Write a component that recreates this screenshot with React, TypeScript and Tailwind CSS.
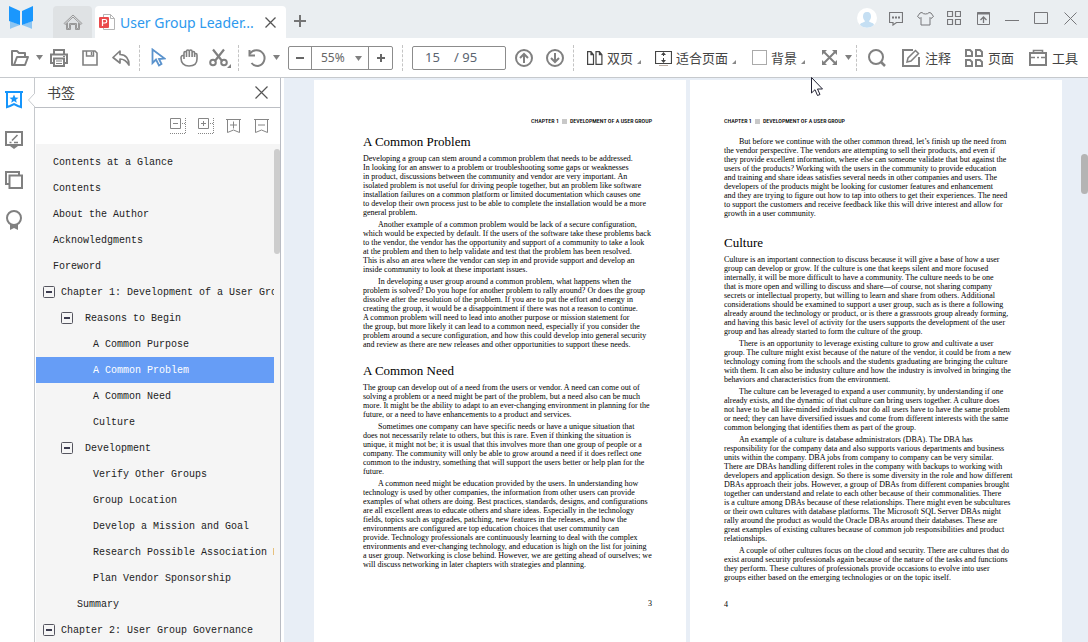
import { useState, type ReactNode } from "react";

type Row = { label: string; kind: "top" | "chapter" | "group" | "leaf" | "end" };

const rows: Row[] = [
  { label: "Contents at a Glance", kind: "top" },
  { label: "Contents", kind: "top" },
  { label: "About the Author", kind: "top" },
  { label: "Acknowledgments", kind: "top" },
  { label: "Foreword", kind: "top" },
  { label: "Chapter 1: Development of a User Group", kind: "chapter" },
  { label: "Reasons to Begin", kind: "group" },
  { label: "A Common Purpose", kind: "leaf" },
  { label: "A Common Problem", kind: "leaf" },
  { label: "A Common Need", kind: "leaf" },
  { label: "Culture", kind: "leaf" },
  { label: "Development", kind: "group" },
  { label: "Verify Other Groups", kind: "leaf" },
  { label: "Group Location", kind: "leaf" },
  { label: "Develop a Mission and Goal", kind: "leaf" },
  { label: "Research Possible Association Relations", kind: "leaf" },
  { label: "Plan Vendor Sponsorship", kind: "leaf" },
  { label: "Summary", kind: "end" },
  { label: "Chapter 2: User Group Governance", kind: "chapter" },
];

const rowStyle = {
  top: "pl-[17px]",
  chapter: "pl-[7px] gap-[6px]",
  group: "pl-[25px] gap-[12px]",
  leaf: "pl-[57px]",
  end: "pl-[41px]",
};

const problem = [
  `Developing a group can stem around a common problem that needs to be addressed.
In looking for an answer to a problem or troubleshooting some gaps or weaknesses
in product, discussions between the community and vendor are very important. An
isolated problem is not useful for driving people together, but an problem like software
installation failures on a common platform or limited documentation which causes one
to develop their own process just to be able to complete the installation would be a more
general problem.`,
  `Another example of a common problem would be lack of a secure configuration,
which would be expected by default. If the users of the software take these problems back
to the vendor, the vendor has the opportunity and support of a community to take a look
at the problem and then to help validate and test that the problem has been resolved.
This is also an area where the vendor can step in and provide support and develop an
inside community to look at these important issues.`,
  `In developing a user group around a common problem, what happens when the
problem is solved? Do you hope for another problem to rally around? Or does the group
dissolve after the resolution of the problem. If you are to put the effort and energy in
creating the group, it would be a disappointment if there was not a reason to continue.
A common problem will need to lead into another purpose or mission statement for
the group, but more likely it can lead to a common need, especially if you consider the
problem around a secure configuration, and how this could develop into general security
and review as there are new releases and other opportunities to support these needs.`,
];

const need = [
  `The group can develop out of a need from the users or vendor. A need can come out of
solving a problem or a need might be part of the problem, but a need also can be much
more. It might be the ability to adapt to an ever-changing environment in planning for the
future, or a need to have enhancements to a product and services.`,
  `Sometimes one company can have specific needs or have a unique situation that
does not necessarily relate to others, but this is rare. Even if thinking the situation is
unique, it might not be; it is usual that this involves more than one group of people or a
company. The community will only be able to grow around a need if it does reflect one
common to the industry, something that will support the users better or help plan for the
future.`,
  `A common need might be education provided by the users. In understanding how
technology is used by other companies, the information from other users can provide
examples of what others are doing. Best practices, standards, designs, and configurations
are all excellent areas to educate others and share ideas. Especially in the technology
fields, topics such as upgrades, patching, new features in the releases, and how the
environments are configured are top education choices that user community can
provide. Technology professionals are continuously learning to deal with the complex
environments and ever-changing technology, and education is high on the list for joining
a user group. Networking is close behind. However, we are getting ahead of ourselves; we
will discuss networking in later chapters with strategies and planning.`,
];

const vendor = [
  `But before we continue with the other common thread, let’s finish up the need from
the vendor perspective. The vendors are attempting to sell their products, and even if
they provide excellent information, where else can someone validate that but against the
users of the products? Working with the users in the community to provide education
and training and share ideas satisfies several needs in other companies and users. The
developers of the products might be looking for customer features and enhancement
and they are trying to figure out how to tap into others to get their experiences. The need
to support the customers and receive feedback like this will drive interest and allow for
growth in a user community.`,
];

const culture = [
  `Culture is an important connection to discuss because it will give a base of how a user
group can develop or grow. If the culture is one that keeps silent and more focused
internally, it will be more difficult to have a community. The culture needs to be one
that is more open and willing to discuss and share—of course, not sharing company
secrets or intellectual property, but willing to learn and share from others. Additional
considerations should be examined to support a user group, such as is there a following
already around the technology or product, or is there a grassroots group already forming,
and having this basic level of activity for the users supports the development of the user
group and has already started to form the culture of the group.`,
  `There is an opportunity to leverage existing culture to grow and cultivate a user
group. The culture might exist because of the nature of the vendor, it could be from a new
technology coming from the schools and the students graduating are bringing the culture
with them. It can also be industry culture and how the industry is involved in bringing the
behaviors and characteristics from the environment.`,
  `The culture can be leveraged to expand a user community, by understanding if one
already exists, and the dynamic of that culture can bring users together. A culture does
not have to be all like-minded individuals nor do all users have to have the same problem
or need; they can have diversified issues and come from different interests with the same
common belonging that identifies them as part of the group.`,
  `An example of a culture is database administrators (DBA). The DBA has
responsibility for the company data and also supports various departments and business
units within the company. DBA jobs from company to company can be very similar.
There are DBAs handling different roles in the company with backups to working with
developers and application design. So there is some diversity in the role and how different
DBAs approach their jobs. However, a group of DBAs from different companies brought
together can understand and relate to each other because of their commonalities. There
is a culture among DBAs because of these relationships. There might even be subcultures
or their own cultures with database platforms. The Microsoft SQL Server DBAs might
rally around the product as would the Oracle DBAs around their databases. These are
great examples of existing cultures because of common job responsibilities and product
relationships.`,
  `A couple of other cultures focus on the cloud and security. There are cultures that do
exist around security professionals again because of the nature of the tasks and functions
they perform. These cultures of professionals provide occasions to evolve into user
groups either based on the emerging technologies or on the topic itself.`,
];

function Icon({ w = 18, h = 18, sw = 2, children }: { w?: number; h?: number; sw?: number; children: ReactNode }) {
  return (
    <svg width={w} height={h} viewBox={`0 0 ${w} ${h}`} fill="none" stroke="currentColor" strokeWidth={sw} className="shrink-0" aria-hidden="true">
      {children}
    </svg>
  );
}

function IconButton({ label, children }: { label: string; children: ReactNode }) {
  return (
    <button type="button" aria-label={label} className="flex h-8 w-6 shrink-0 items-center justify-center text-[#808080]">
      {children}
    </button>
  );
}

function Caret({ label }: { label: string }) {
  return (
    <button type="button" aria-label={label} className="flex h-8 w-[15px] shrink-0 items-center justify-center text-[#808080]">
      <svg width="7" height="5" viewBox="0 0 7 5" fill="currentColor">
        <path d="M0 0h7L3.5 5z" />
      </svg>
    </button>
  );
}

function Corner() {
  return (
    <svg width="4" height="4" viewBox="0 0 4 4" fill="#888888" className="mt-2 shrink-0" aria-hidden="true">
      <path d="M4 0v4H0z" />
    </svg>
  );
}

function Divider() {
  return <span className="mx-[6px] h-[26px] shrink-0 border-l border-dashed border-[#c4c4c4]" />;
}

function TitleBar() {
  return (
    <header className="flex h-[38px] shrink-0 items-end bg-[#eaeef1] pr-2">
      <svg width="26" height="24" viewBox="0 0 26 24" className="mb-2 ml-2 mr-[19px]" aria-label="PDF reader">
        <path d="M2 15l10 4-8 3-2 1z" fill="#8cc5f2" />
        <path d="M24 15l-10 4 8 3 2 1z" fill="#8cc5f2" />
        <path d="M1 0l11 5v14L1 15z" fill="#1a97fd" />
        <path d="M25 0L14 5v14l11-4z" fill="#1a97fd" />
      </svg>
      <button type="button" aria-label="Home" className="mr-[3px] flex h-8 w-[39px] items-center justify-center rounded-t bg-[#dfe2e4] text-[#999999]">
        <Icon w={20} h={18} sw={1}>
          <path d="M1 10.500L10 2l9 8.500-1 1-8-7.500-8 7.500zM3.500 10.500v6h4v-5h5v5h4v-6" />
          <path d="M4.500 10v5.500h2v-5h7v5h2V10" />
        </Icon>
      </button>
      <div className="flex h-8 w-[191px] items-center rounded-t bg-white pl-1">
        <svg width="17" height="17" viewBox="0 0 17 17" className="mr-1 shrink-0" aria-hidden="true">
          <path d="M4.500 .5h7l4 4v11h-11z" fill="#fff" stroke="#b5b5b5" />
          <path d="M11.500 .5v4h4" fill="none" stroke="#b5b5b5" />
          <rect y="3" width="10" height="11" rx="1" fill="#ea4a4c" />
          <path d="M3.500 12V5.500H6a1.500 1.500 0 010 3.500H3.500" fill="none" stroke="#fff" strokeWidth="1.200" />
        </svg>
        <span className="flex-1 whitespace-nowrap font-['Noto_Sans','Noto_Sans_CJK_SC',sans-serif] text-[14px] text-[#2d99ee]">User Group Leader...</span>
        <button type="button" aria-label="Close tab" className="mr-2.5 text-[#555555]">
          <Icon w={11} h={11} sw={1}>
            <path d="M.5 .5l10 10M10.500 .5l-10 10" strokeWidth="1.300" />
          </Icon>
        </button>
      </div>
      <button type="button" aria-label="New tab" className="mb-[11px] ml-2 text-[#757575]">
        <Icon w={12} h={12}>
          <path d="M6 0v12M0 6h12" />
        </Icon>
      </button>
      <div className="mb-[10px] ml-auto flex items-center gap-[9px] text-[#77777a]">
        <button type="button" aria-label="Account" className="flex w-5 justify-center">
          <svg width="20" height="20" viewBox="0 0 20 20">
            <circle cx="10" cy="10" r="10" fill="#fff" />
            <path d="M10 4c3 0 4 2 4 4.500 0 2-1 3.500-2 4.500 0 1.500 5 1.500 5 4a10 10 0 01-14 0c0-2.500 5-2.500 5-4-1-1-2-2.500-2-4.500C6 6 7 4 10 4z" fill="#c5dff3" />
          </svg>
        </button>
        <button type="button" aria-label="Feedback" className="flex w-5 justify-center">
          <Icon w={14} h={15} sw={1}>
            <path d="M.5 1.500h13v10h-6L4 14v-2.500H.5z" strokeWidth="1.200" />
            <path d="M3 6.500h2M6 6.500h2M9 6.500h2" strokeWidth="2" />
          </Icon>
        </button>
        <button type="button" aria-label="Skin" className="flex w-5 justify-center">
          <Icon w={17} h={15} sw={1}>
            <path d="M5 1.500c1 2 6 2 7 0l2 .5 2.500 3.500-2.500 2-1-1v7.500H4V6.500l-1 1-2.500-2L3 2z" />
          </Icon>
        </button>
        <button type="button" aria-label="Apps" className="flex w-5 justify-center">
          <Icon w={14} h={14} sw={1}>
            <path d="M.5 .5h5v5h-5zM8.500 .5h5v5h-5zM.5 8.500h5v5h-5zM8.500 8.500h5v5h-5z" strokeWidth="1.200" />
          </Icon>
        </button>
        <button type="button" aria-label="Upload" className="flex w-5 justify-center">
          <Icon w={13} h={13} sw={1}>
            <path d="M.5 .5h12v12H.5z" />
            <path d="M0 1.500h13" strokeWidth="2" />
            <path d="M6.500 11V5M3.500 8l3-3 3 3" strokeWidth="1.300" />
          </Icon>
        </button>
        <button type="button" aria-label="Minimize" className="flex w-5 justify-center">
          <Icon w={14} h={12} sw={1}>
            <path d="M0 8.500h14" />
          </Icon>
        </button>
        <button type="button" aria-label="Maximize" className="flex w-5 justify-center">
          <Icon w={14} h={13} sw={1}>
            <path d="M.5 .5h13v11H.5z" />
          </Icon>
        </button>
        <button type="button" aria-label="Close" className="flex w-5 justify-center">
          <Icon w={13} h={13} sw={1}>
            <path d="M.5 .5l12 12M12.500 .5l-12 12" />
          </Icon>
        </button>
      </div>
    </header>
  );
}

function Toolbar() {
  const [page, setPage] = useState("15");

  return (
    <div className="flex h-10 shrink-0 items-center border-b border-[#c6c9cd] bg-white pl-2 pr-[10px] font-['Noto_Sans_CJK_SC',sans-serif] text-[13px] text-[#444444]">
      <IconButton label="Open">
        <Icon>
          <path d="M3 16L1 16V2h5l2 2h6v3M3 16l3-8h11l-3 8z" strokeLinejoin="round" />
        </Icon>
      </IconButton>
      <Caret label="Open recent" />
      <div className="flex gap-[7px]">
        <IconButton label="Print">
          <Icon>
            <path d="M4 5V1h10v4M4 14H1V5.500h16V14h-3M4 9.500h10V17H4z" />
            <path d="M6 12h6M6 14.500h6M13 7.500h2" strokeWidth="1" />
          </Icon>
        </IconButton>
        <IconButton label="Save">
          <Icon w={16} h={16} sw={1}>
            <path d="M1 1h12l2 2v12H1z" strokeWidth="1.600" />
            <path d="M4.500 1v5h7V1M9.500 2v3" strokeWidth="1.400" />
          </Icon>
        </IconButton>
        <IconButton label="Share">
          <Icon>
            <path d="M8 2L1 8.500 8 14v-4c4 0 6.500 2 9 6 0-6-3-10.500-9-10.500z" strokeWidth="1.700" strokeLinejoin="round" />
          </Icon>
        </IconButton>
      </div>
      <Divider />
      <div className="flex gap-[7px]">
        <IconButton label="Select">
          <svg width="15" height="19" viewBox="0 0 15 19" fill="none" stroke="#5b93cd" strokeWidth="1.800">
            <path d="M1.500 1.500v13.500l3.500-3.500 3 6 2.500-1.500-2.500-5 5.500-.5z" />
          </svg>
        </IconButton>
        <IconButton label="Hand">
          <Icon sw={1.6}>
            <path d="M4 10V4c0-2 2.500-2 2.500 0v4M6.500 8V2.500c0-2 2.800-2 2.800 0V8M9.300 8V2.500c0-2 2.800-2 2.800 0V8M12.100 8V4c0-2 2.500-2 2.500 0v4M14.600 8V6c0-2 2.400-2 2.400 0v4c0 5-3 7-8 7s-8-3-8-8c0-2.500 1.500-3 3-2" />
          </Icon>
        </IconButton>
        <IconButton label="Snapshot">
          <Icon w={22} h={20}>
            <path d="M4 1.500l9.500 12M15 1.500l-9.500 12" strokeWidth="2.200" />
            <circle cx="4" cy="14.500" r="2.800" />
            <circle cx="15" cy="14.500" r="2.800" />
            <path d="M22 16v4h-4z" fill="currentColor" stroke="none" />
          </Icon>
        </IconButton>
      </div>
      <Divider />
      <IconButton label="Rotate">
        <Icon>
          <path d="M2 4.500A8 8 0 1110 17c-3 0-5-1-6.500-3M1.500 1v5.500H7" />
        </Icon>
      </IconButton>
      <Caret label="Rotate options" />
      <div className="relative ml-1 flex h-6 w-[105px] shrink-0 rounded-xs border border-[#8c8c8c] font-['Noto_Sans',sans-serif] text-[#666666]">
        <button type="button" aria-label="Zoom out" className="flex w-[23px] items-center justify-center border-r border-[#8c8c8c]">
          <Icon w={8} h={8}>
            <path d="M0 4h8" />
          </Icon>
        </button>
        <select aria-label="Zoom" className="w-14 appearance-none bg-transparent pl-[9px] text-[12px] outline-none">
          <option>55%</option>
          <option>100%</option>
        </select>
        <svg width="7" height="5" viewBox="0 0 7 5" fill="#808080" className="pointer-events-none absolute left-[66px] top-[9px]">
          <path d="M0 0h7L3.500 5z" />
        </svg>
        <button type="button" aria-label="Zoom in" className="flex flex-1 items-center justify-center border-l border-[#8c8c8c]">
          <Icon w={8} h={8}>
            <path d="M0 4h8M4 0v8" />
          </Icon>
        </button>
      </div>
      <span className="mx-[9px] h-[26px] border-l border-dashed border-[#c4c4c4]" />
      <label className="mr-1.5 flex h-6 w-[94px] shrink-0 items-center rounded-xs border border-[#8c8c8c] pl-3 font-['Noto_Sans',sans-serif] text-[13px] text-[#5a6470]">
        <input aria-label="Page" value={page} onChange={(e) => setPage(e.target.value)} className="w-[29px] bg-transparent outline-none" />
        <span className="whitespace-pre">/ 95</span>
      </label>
      <div className="flex gap-[7px]">
        <IconButton label="Previous page">
          <Icon>
            <circle cx="9" cy="9" r="8" />
            <path d="M9 14V5M5 9l4-4 4 4" />
          </Icon>
        </IconButton>
        <IconButton label="Next page">
          <Icon>
            <circle cx="9" cy="9" r="8" />
            <path d="M9 4v9M5 9l4 4 4-4" />
          </Icon>
        </IconButton>
      </div>
      <Divider />
      <button type="button" className="ml-[7px] flex shrink-0 items-center gap-1">
        <Icon w={16} h={14} sw={1}>
          <path d="M.6 .6h3.400l2.500 3v9.800H.6zM4 .6v3h2.500M9 .6h3.400l2.500 3v9.800H9zM12.400 .6v3h2.500" strokeWidth="1.200" />
        </Icon>
        双页
        <Corner />
      </button>
      <button type="button" className="ml-[14px] flex shrink-0 items-center gap-1">
        <Icon w={17} h={16} sw={1}>
          <path d="M.5 1.500h16v12H.5z" strokeWidth="1.200" />
          <path d="M8.500 3v9" strokeDasharray="3 2" />
          <path d="M6 5l2.500-3L11 5zM6 10l2.500 3 2.500-3z" fill="currentColor" stroke="none" />
          <path d="M4 15.500h9" stroke="#b9aaa0" />
        </Icon>
        适合页面
        <Corner />
      </button>
      <label className="ml-4 flex shrink-0 items-center gap-1">
        <input type="checkbox" className="h-[15px] w-[15px] appearance-none border border-[#aaaaaa] bg-white" />
        背景
        <Corner />
      </label>
      <div className="ml-3 flex items-center">
        <IconButton label="Full screen">
          <Icon w={15} h={15}>
            <path d="M2 2l11 11M13 2L2 13" />
            <path d="M0 0h5L0 5zM15 0v5l-5-5zM15 15h-5l5-5zM0 15v-5l5 5z" fill="currentColor" stroke="none" />
          </Icon>
        </IconButton>
        <Caret label="View options" />
      </div>
      <span className="h-[26px] border-l border-dashed border-[#c4c4c4]" />
      <div className="ml-auto flex shrink-0 items-center">
        <IconButton label="Search">
          <Icon>
            <circle cx="8" cy="8" r="7" />
            <path d="M13 13l4 4" strokeWidth="2.500" />
          </Icon>
        </IconButton>
        <button type="button" className="ml-[13px] flex items-center gap-[5px]">
          <span className="text-[#808080]">
            <Icon>
              <path d="M11 1H1v16h16V8" />
              <path d="M5 13l1-4 7.500-7.500 3 3L9 12z" strokeWidth="1.500" />
            </Icon>
          </span>
          注释
        </button>
        <button type="button" className="ml-[14px] flex items-center gap-[5px]">
          <span className="text-[#808080]">
            <Icon>
              <path d="M1 1h4l2 2v4H1zM11 1h4l2 2v4h-6zM1 11h4l2 2v4H1zM11 11h4l2 2v4h-6z" />
            </Icon>
          </span>
          页面
        </button>
        <button type="button" className="ml-[15px] flex items-center gap-[5px]">
          <span className="text-[#808080]">
            <Icon>
              <path d="M1 4h16v12H1z" />
              <path d="M4.500 4V1.500h9V4M1 8.500h5M8 8.500h2M12 8.500h5" strokeWidth="1.600" />
            </Icon>
          </span>
          工具
        </button>
      </div>
    </div>
  );
}

function Rail() {
  const button = "flex h-10 items-center pl-[5px] text-[#808080]";

  return (
    <nav className="relative w-[35px] shrink-0 border-r border-[#c6c9cd] bg-white pt-0.5">
      <button type="button" aria-label="Bookmarks" className="flex h-10 items-center pl-[5px] text-[#1595fb]">
        <Icon w={18} h={18}>
          <path d="M0 1h18" />
          <path d="M2 1v15l3-1 4-2 4 2 3 1V1" />
          <path d="M9 3.500l1.300 3 3.200.2-2.500 2 .8 3.100L9 10l-2.800 1.800.8-3.100-2.500-2 3.200-.2z" fill="currentColor" stroke="none" />
        </Icon>
      </button>
      <button type="button" aria-label="Annotations" className={button}>
        <Icon w={18} h={18}>
          <path d="M1 1h16v13H1z" />
          <path d="M5 15h8l-4 3z" fill="currentColor" stroke="none" />
          <path d="M7 9.500L12.500 4M4.500 11.500h2M9 11.500h4" strokeWidth="1.600" />
        </Icon>
      </button>
      <button type="button" aria-label="Thumbnails" className={button}>
        <Icon w={18} h={18}>
          <path d="M4.500 4.500H17V17H4.500z" />
          <path d="M14 4V1H1v12h3" />
        </Icon>
      </button>
      <button type="button" aria-label="Signatures" className={button}>
        <Icon w={18} h={20}>
          <circle cx="9" cy="8" r="7" />
          <path d="M5 14v6l4-2 4 2v-6l-4 1z" fill="currentColor" stroke="none" />
        </Icon>
      </button>
      <svg width="8" height="14" viewBox="0 0 8 14" className="absolute -right-px top-[15px]">
        <path d="M8 0v14L1.500 7z" fill="#fff" />
        <path d="M7.500 0v.5l-6 6.500 6 6.500v.5" fill="none" stroke="#c6c9cd" />
      </svg>
    </nav>
  );
}

function Bookmarks() {
  const [selected, setSelected] = useState("A Common Problem");

  return (
    <aside className="flex w-[246px] shrink-0 flex-col border-r border-[#b9bcc4] bg-white">
      <div className="flex h-[30px] shrink-0 items-center justify-between border-b border-[#bcbfc4] px-3">
        <h2 className="font-['Noto_Sans_CJK_SC',sans-serif] text-[14px] text-[#444444]">书签</h2>
        <button type="button" aria-label="Close panel" className="text-[#555555]">
          <Icon w={13} h={13} sw={1}>
            <path d="M.5 .5l12 12M12.500 .5l-12 12" strokeWidth="1.200" />
          </Icon>
        </button>
      </div>
      <div className="flex h-9 shrink-0 items-center justify-end gap-3 pr-[10px] text-[#868686]">
        <button type="button" aria-label="Collapse all">
          <Icon w={16} h={16} sw={1}>
            <path d="M.5 .5h10v10H.5zM3 5.500h5" />
            <path d="M15.500 0v15M0 15.500h16M12 5.500h3" strokeDasharray="1 1" />
          </Icon>
        </button>
        <button type="button" aria-label="Expand all">
          <Icon w={16} h={16} sw={1}>
            <path d="M.5 .5h10v10H.5zM3 5.500h5M5.500 3v5" />
            <path d="M15.500 0v15M0 15.500h16M12 5.500h3" strokeDasharray="1 1" />
          </Icon>
        </button>
        <button type="button" aria-label="Add bookmark">
          <Icon w={16} h={16} sw={1}>
            <path d="M0 1.500h15M1.500 1.500v13l6-2.500 6 2.500v-13M4 7h7M7.500 3.500v7" />
          </Icon>
        </button>
        <button type="button" aria-label="Delete bookmark">
          <Icon w={16} h={16} sw={1}>
            <path d="M0 1.500h15M1.500 1.500v13l6-2.500 6 2.500v-13M4 7h7" />
          </Icon>
        </button>
      </div>
      <div className="ml-px flex min-h-0 flex-1 bg-[#f5f5f5] pt-[5px]">
        <ul className="min-w-0 flex-1 overflow-hidden font-['Liberation_Mono',monospace] text-[10px]">
          {rows.map((row) => (
            <li key={row.label}>
              <button
                type="button"
                onClick={() => setSelected(row.label)}
                className={`flex h-[26px] w-full items-center overflow-hidden whitespace-nowrap ${rowStyle[row.kind]} ${
                  row.label === selected ? "bg-[#669df6] text-white" : "text-[#222222]"
                }`}
              >
                {(row.kind === "chapter" || row.kind === "group") && (
                  <svg width="12" height="12" viewBox="0 0 12 12" fill="none" className="shrink-0" aria-hidden="true">
                    <rect x=".5" y=".5" width="11" height="11" rx="1" stroke="#55555f" />
                    <path d="M3 6h6" stroke="#3c3c50" strokeWidth="2" />
                  </svg>
                )}
                {row.label}
              </button>
            </li>
          ))}
        </ul>
        <span className="h-[105px] w-1.5 shrink-0 rounded-full bg-[#cdcdcd]" />
      </div>
    </aside>
  );
}

function RunningHead() {
  return (
    <p className="flex items-center gap-[3px] whitespace-nowrap font-['Liberation_Sans_Narrow','Roboto_Condensed',Roboto,sans-serif] text-[6px] font-medium leading-[8px] text-black">
      CHAPTER 1 <span className="h-[5px] w-[5px] bg-[#c8c8c8]" /> DEVELOPMENT OF A USER GROUP
    </p>
  );
}

function Prose({ paragraphs, indentFirst = false }: { paragraphs: string[]; indentFirst?: boolean }) {
  return (
    <div className="flex flex-col gap-[3px] whitespace-pre text-[8px] leading-[9px]">
      {paragraphs.map((text, i) => (
        <p key={text} className={i > 0 || indentFirst ? "indent-[15px]" : ""}>
          {text}
        </p>
      ))}
    </div>
  );
}

function Document() {
  const sheet = "w-[372px] shrink-0 bg-white pt-[37px]";

  return (
    <main className="relative ml-[3px] flex min-w-0 flex-1 justify-center gap-1 overflow-hidden bg-[#e8eef6] pl-1 pt-0.5 font-['Liberation_Serif',serif] text-black">
      <article className={`${sheet} pl-[49px] pr-[34px]`}>
        <div className="flex justify-end">
          <RunningHead />
        </div>
        <h2 className="mb-1 mt-[9px] text-[13px] leading-4">A Common Problem</h2>
        <Prose paragraphs={problem} />
        <h2 className="mb-1 mt-[14px] text-[13px] leading-4">A Common Need</h2>
        <Prose paragraphs={need} />
        <p className="mt-[30px] text-right text-[8px] leading-[9px]">3</p>
      </article>
      <article className={`${sheet} pl-[34px] pr-[49px]`}>
        <RunningHead />
        <div className="mt-3">
          <Prose paragraphs={vendor} indentFirst />
        </div>
        <h2 className="mb-1 mt-[17px] text-[13px] leading-4">Culture</h2>
        <Prose paragraphs={culture} />
        <p className="mt-[18px] text-[8px] leading-[9px]">4</p>
      </article>
      <span className="absolute right-0 top-[76px] h-10 w-[7px] rounded-full bg-[#b4b4b4]" />
    </main>
  );
}

export default function App() {
  return (
    <div className="relative flex h-screen flex-col overflow-hidden bg-white">
      <TitleBar />
      <Toolbar />
      <div className="flex min-h-0 flex-1">
        <Rail />
        <Bookmarks />
        <Document />
      </div>
      <svg width="12" height="19" viewBox="0 0 12 19" className="pointer-events-none absolute left-[811px] top-[77px]">
        <path d="M.5 .5v15.500l3.500-3.300 2.500 5.800 2.500-1-2.500-5.500h5z" fill="#fff" stroke="#222233" />
      </svg>
    </div>
  );
}
